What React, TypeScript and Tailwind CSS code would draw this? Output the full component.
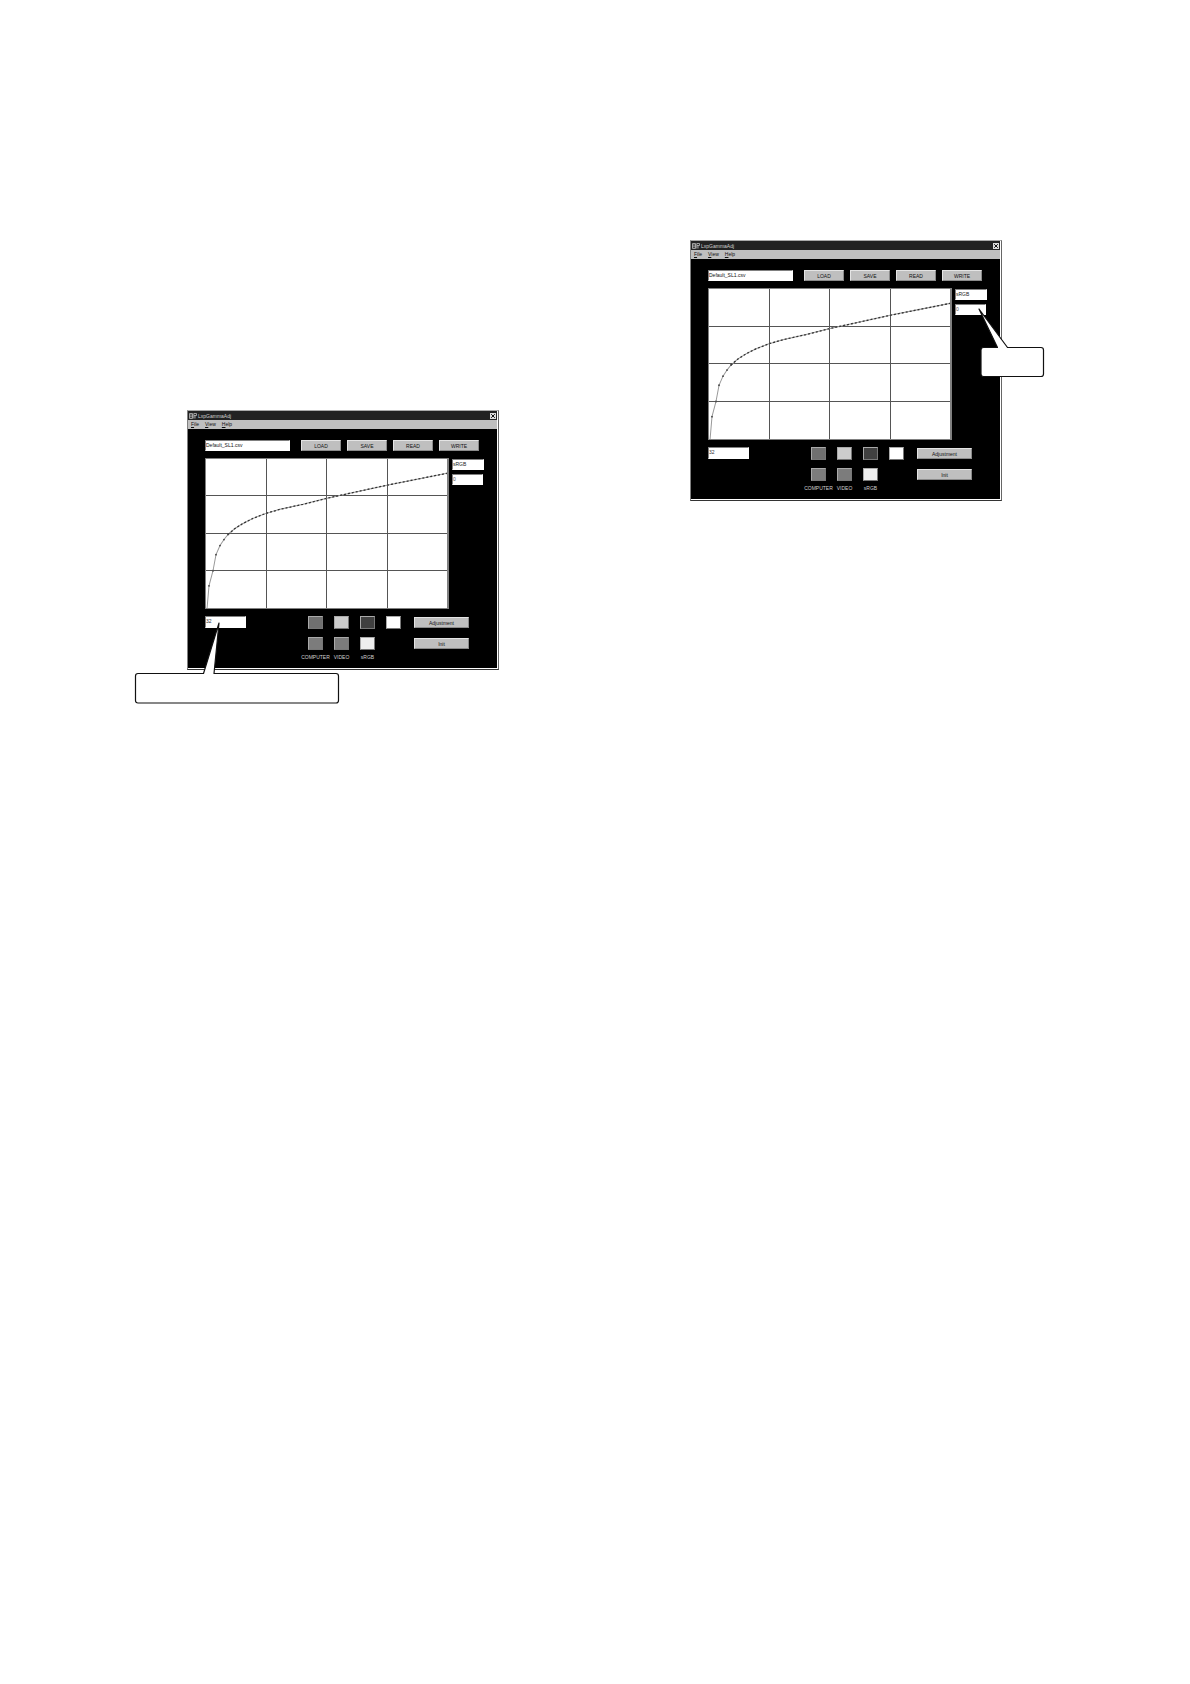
import type { ReactNode } from "react";

const points = [
  [2, 150], [4, 127], [8, 112], [11, 96], [15, 87], [19, 81], [23, 76], [30, 70], [38, 65],
  [48, 60], [61, 55], [75, 51], [98, 46], [122, 40], [145, 35], [182, 27], [243, 15],
];

const steep = points.slice(0, 7).map((p) => p.join(",")).join(" ");
const shallow = points.slice(6).map((p) => p.join(",")).join(" ");

const topSwatches = [
  { name: "Gray", color: "bg-[#707070]" },
  { name: "Light gray", color: "bg-[#cccccc]" },
  { name: "Dark gray", color: "bg-[#404040]" },
  { name: "White", color: "bg-white" },
];

const modes = [
  { name: "COMPUTER", color: "bg-[#7c7c7c]" },
  { name: "VIDEO", color: "bg-[#7c7c7c]" },
  { name: "sRGB", color: "bg-[#eeeeee]" },
];

function PushButton({ children, className }: { children: ReactNode; className: string }) {
  return (
    <button
      type="button"
      className={`flex h-[11px] items-center justify-center border border-t-[#e4e4e4] border-l-[#e4e4e4] border-r-[#8a8a8a] border-b-[#8a8a8a] bg-[#bfbfbf] text-[#111] ${className}`}
    >
      {children}
    </button>
  );
}

function Field({ label, value, className }: { label: string; value: string; className: string }) {
  return (
    <input
      type="text"
      aria-label={label}
      defaultValue={value}
      className={`block border border-t-[#808080] border-l-[#808080] border-r-white border-b-white bg-white pb-[2px] outline-none ${className}`}
    />
  );
}

function GammaPlot() {
  return (
    <div className="grid min-h-0 w-[244px] border-t border-b border-l border-r-2 border-[#808080] bg-white">
      {/* grid lines */}
      <div className="col-start-1 row-start-1 grid grid-cols-[61px_60px_61px_1fr] grid-rows-4">
        {Array.from({ length: 16 }, (_, i) => (
          <div
            key={i}
            className={`${i % 4 < 3 ? "border-r" : ""} ${i < 12 ? "border-b" : ""} border-[#555]`}
          />
        ))}
      </div>
      <svg
        viewBox="1 1 241 148"
        preserveAspectRatio="none"
        className="col-start-1 row-start-1 block h-full min-h-0 w-full"
        fill="none"
      >
        <polyline points={steep} stroke="#999" strokeWidth="1" />
        <polyline points={shallow} stroke="#999" strokeWidth="1" />
        <polyline points={shallow} stroke="#333" strokeWidth="1.3" strokeDasharray="2 2" />
        <g fill="#444">
          {points.slice(1, 7).map(([x, y]) => (
            <circle key={x} cx={x} cy={y} r="0.9" />
          ))}
        </g>
      </svg>
    </div>
  );
}

function GammaWindow({ className }: { className: string }) {
  return (
    <div
      className={`flex w-[312px] flex-col border border-t-[#aaa] border-l-[#808080] border-r-[#666] border-b-[#333] bg-white pr-px pb-px text-[5px] leading-[8px] ${className}`}
    >
      <header className="flex h-[9px] shrink-0 items-center bg-[#222] pl-px text-[#d0d0d0]">
        <svg viewBox="0 0 8 6" className="h-[6px] w-[8px]" fill="none" stroke="#bbb" strokeWidth="0.8">
          <path d="M.5 .5H3.5V5.5H.5ZM.5 2H3.5M.5 3.8H3.5M4.8 5.5V.5H7.5V2.5H5M6 2.5V5.5" />
        </svg>
        <h2 className="ml-px flex-1">LxpGammaAdj</h2>
        <button type="button" aria-label="Close" className="mr-px bg-[#ddd]">
          <svg viewBox="0 0 6 6" className="block h-[6px] w-[6px]" stroke="#111" strokeWidth="1">
            <path d="M1.2 1.2L4.8 4.8M4.8 1.2L1.2 4.8" />
          </svg>
        </button>
      </header>
      <nav className="flex h-[9px] shrink-0 items-start gap-[6px] bg-[#bfbfbf] px-[3px] text-[#111]">
        <button type="button"><u>F</u>ile</button>
        <button type="button"><u>V</u>iew</button>
        <button type="button"><u>H</u>elp</button>
      </nav>
      <div className="flex min-h-0 flex-1 flex-col bg-black pt-[11px] pr-[12px] pb-[7px] pl-[17px]">
        <div className="flex shrink-0 items-start">
          <Field label="File name" value="Default_SL1.csv" className="h-[11px] w-[85px] text-[#111]" />
          <div className="ml-[11px] flex gap-[6px]">
            <PushButton className="w-[40px]">LOAD</PushButton>
            <PushButton className="w-[40px]">SAVE</PushButton>
            <PushButton className="w-[40px]">READ</PushButton>
            <PushButton className="w-[40px]">WRITE</PushButton>
          </div>
        </div>
        <div className="mt-[7px] flex min-h-0 flex-1">
          <GammaPlot />
          <div className="mt-px ml-[3px] flex flex-col gap-[4px]">
            <Field label="Mode" value="sRGB" className="h-[11px] w-[32px] text-[#222]" />
            <Field label="Level" value="0" className="h-[11px] w-[31px] text-[#555]" />
          </div>
        </div>
        <div className="mt-[7px] flex shrink-0 items-start">
          <Field label="Point" value="32" className="h-[12px] w-[41px] text-[#333]" />
          <div className="ml-[56px]">
            <div className="ml-[6px] flex gap-[11px]">
              {topSwatches.map((s) => (
                <button
                  key={s.name}
                  type="button"
                  aria-label={s.name}
                  className={`h-[13px] w-[15px] border border-t-[#aaa] border-l-[#aaa] border-r-[#777] border-b-[#777] ${s.color}`}
                />
              ))}
            </div>
            <div className="mt-[8px] flex">
              {modes.map((m) => (
                <button key={m.name} type="button" className="mr-[-1px] flex w-[27px] flex-col items-center text-[#d0d0d0]">
                  <span
                    className={`h-[13px] w-[15px] border border-t-[#aaa] border-l-[#aaa] border-r-[#777] border-b-[#777] ${m.color}`}
                  />
                  <span className="mt-[3px]">{m.name}</span>
                </button>
              ))}
            </div>
          </div>
          <div className="mt-px mr-[16px] ml-auto flex flex-col gap-[10px]">
            <PushButton className="w-[55px]">Adjustment</PushButton>
            <PushButton className="w-[55px]">Init</PushButton>
          </div>
        </div>
      </div>
    </div>
  );
}

export default function App() {
  return (
    <main className="grid min-h-screen grid-cols-2 items-start bg-white font-['Liberation_Sans',Arial,sans-serif]">
      <figure className="pt-[410px] pl-[187px]">
        <div className="relative w-[312px]">
          <GammaWindow className="h-[260px]" />
          <svg viewBox="0 0 206 84" className="absolute top-[211px] left-[-53px] h-[84px] w-[206px]" fill="white" stroke="#111" strokeWidth="1.2" strokeLinejoin="round">
            <path d="M4 52.5H69.5L85 2L80 52.5H202Q204.5 52.5 204.5 55V79.5Q204.5 82 202 82H4Q1.5 82 1.5 79.5V55Q1.5 52.5 4 52.5Z" />
          </svg>
        </div>
      </figure>
      <figure className="pt-[240px] pl-[95px]">
        <div className="relative w-[312px]">
          <GammaWindow className="h-[261px]" />
          <svg viewBox="0 0 68 72" className="absolute top-[67px] left-[287px] h-[72px] w-[68px]" fill="white" stroke="#111" strokeWidth="1.2" strokeLinejoin="round">
            <path d="M6.500 40.500H20.500L2 2L30.500 40.500H64Q66.500 40.500 66.500 43V67Q66.500 69.500 64 69.500H6.500Q4 69.500 4 67V43Q4 40.500 6.500 40.500Z" />
          </svg>
        </div>
      </figure>
    </main>
  );
}
